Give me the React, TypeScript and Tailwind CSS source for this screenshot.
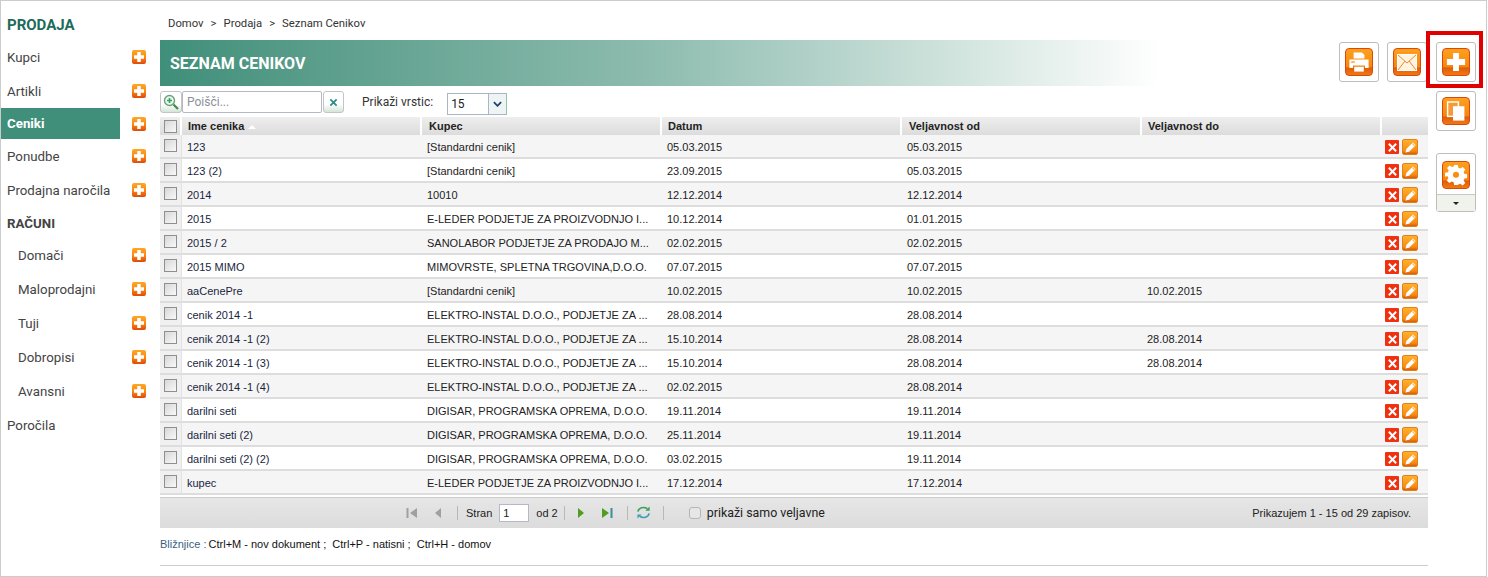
import React from 'react'

const sans = "font-['Liberation_Sans',Arial,sans-serif]"

const menu = [
    { label: 'Kupci', h: 'h-[34px]', plus: true },
    { label: 'Artikli', h: 'h-[34px]', plus: true },
    { label: 'Ceniki', h: 'h-[31px]', plus: true, active: true },
    { label: 'Ponudbe', h: 'h-[34px]', plus: true },
    { label: 'Prodajna naročila', h: 'h-[34px]', plus: true },
    { label: 'RAČUNI', h: 'h-[31px]', title: true },
    { label: 'Domači', h: 'h-[34px]', plus: true, sub: true },
    { label: 'Maloprodajni', h: 'h-[34px]', plus: true, sub: true },
    { label: 'Tuji', h: 'h-[34px]', plus: true, sub: true },
    { label: 'Dobropisi', h: 'h-[34px]', plus: true, sub: true },
    { label: 'Avansni', h: 'h-[34px]', plus: true, sub: true },
    { label: 'Poročila', h: 'h-[34px]' },
]

const rows = [
    ['123', '[Standardni cenik]', '05.03.2015', '05.03.2015', ''],
    ['123 (2)', '[Standardni cenik]', '23.09.2015', '05.03.2015', ''],
    ['2014', '10010', '12.12.2014', '12.12.2014', ''],
    ['2015', 'E-LEDER PODJETJE ZA PROIZVODNJO I...', '10.12.2014', '01.01.2015', ''],
    ['2015 / 2', 'SANOLABOR PODJETJE ZA PRODAJO M...', '02.02.2015', '02.02.2015', ''],
    ['2015 MIMO', 'MIMOVRSTE, SPLETNA TRGOVINA,D.O.O.', '07.07.2015', '07.07.2015', ''],
    ['aaCenePre', '[Standardni cenik]', '10.02.2015', '10.02.2015', '10.02.2015'],
    ['cenik 2014 -1', 'ELEKTRO-INSTAL D.O.O., PODJETJE ZA ...', '28.08.2014', '28.08.2014', ''],
    ['cenik 2014 -1 (2)', 'ELEKTRO-INSTAL D.O.O., PODJETJE ZA ...', '15.10.2014', '28.08.2014', '28.08.2014'],
    ['cenik 2014 -1 (3)', 'ELEKTRO-INSTAL D.O.O., PODJETJE ZA ...', '15.10.2014', '28.08.2014', '28.08.2014'],
    ['cenik 2014 -1 (4)', 'ELEKTRO-INSTAL D.O.O., PODJETJE ZA ...', '02.02.2015', '28.08.2014', ''],
    ['darilni seti', 'DIGISAR, PROGRAMSKA OPREMA, D.O.O.', '19.11.2014', '19.11.2014', ''],
    ['darilni seti (2)', 'DIGISAR, PROGRAMSKA OPREMA, D.O.O.', '25.11.2014', '19.11.2014', ''],
    ['darilni seti (2) (2)', 'DIGISAR, PROGRAMSKA OPREMA, D.O.O.', '03.02.2015', '19.11.2014', ''],
    ['kupec', 'E-LEDER PODJETJE ZA PROIZVODNJO I...', '17.12.2014', '17.12.2014', ''],
]

const MiniPlus = () => (
    <span className="flex items-center justify-center w-[14px] h-[14px] rounded-[2px] bg-gradient-to-b from-[#ffa726] via-[#f98a12] to-[#e0480a]">
        <svg viewBox="0 0 14 14" className="w-[14px] h-[14px]"><path d="M5.250 2h3.500v3.250H12v3.500H8.750V12h-3.500V8.750H2v-3.500h3.250z" fill="#fff" /></svg>
    </span>
)

const CheckBox = () => (
    <span className="block w-[13px] h-[13px] border border-[#8f8f8f] bg-gradient-to-br from-[#d8d8d8] to-[#f8f8f8]"></span>
)

const orange = 'w-[28px] h-[28px] rounded-[4px] border border-[#d9480f] bg-[linear-gradient(#fda01e_0%,#f7860e_70%,#e05a0c_72%,#ef7a10_100%)] flex items-center justify-center'

const ActionButton = ({ children, className = '' }: any) => (
    <div className={`w-[40px] h-[40px] rounded-[3px] border border-[#bdbdbd] bg-white flex items-center justify-center ${className}`}>
        <span className={orange}>{children}</span>
    </div>
)

const PagerSep = () => <span className="block w-px h-[14px] bg-[#b9b9b0]"></span>

export default function App() {
    return (
        <div className={`w-[1487px] h-[577px] border border-[#cccccc] bg-white flex overflow-hidden relative ${sans}`}>
            <aside className="w-[159px] shrink-0 font-['Roboto',sans-serif]">
                <h2 className="h-[39px] pt-[14px] pl-[6px] text-[15px] leading-[20px] font-bold text-[#1e6b5a]">PRODAJA</h2>
                {menu.map((item) => (
                    <div key={item.label} className={`${item.h} flex items-center relative`}>
                        <div className={`w-[119px] h-full flex items-center ${item.active ? 'bg-[#3f8f7a] text-white font-bold' : 'text-[#444444] pt-[2px]'} ${item.sub ? 'pl-[17px]' : 'pl-[6px]'} ${item.title ? 'font-bold text-[#1e6b5a]' : ''} text-[13.300px]`}>
                            {item.label}
                        </div>
                        {item.plus && <span className="ml-[12px]"><MiniPlus /></span>}
                    </div>
                ))}
            </aside>

            <main className="flex-1 min-w-0">
                <div className="h-[39px] pl-[8px] pt-[16px] text-[11.300px] leading-[14px] text-[#333333] font-['Roboto',sans-serif] flex items-start">
                    <span>Domov</span>
                    <span className="mx-[7px]">&gt;</span>
                    <span>Prodaja</span>
                    <span className="mx-[7px]">&gt;</span>
                    <span>Seznam Cenikov</span>
                </div>

                <div className="flex">
                    <div className="w-[1268px] shrink-0">
                        <div className="h-[46px] w-[1000px] flex items-center pl-[10px] bg-gradient-to-r from-[#3f8f7a] via-[#8fbdb0] to-[#ffffff]">
                            <h1 className="mt-[1px] font-['Roboto',sans-serif] font-bold text-[16px] text-white">SEZNAM CENIKOV</h1>
                        </div>

                        <div className="h-[31px] pt-[5px] flex items-start">
                            <span className="w-[22px] h-[22px] rounded-[3px] border border-[#c4c4c4] bg-[linear-gradient(#ffffff_60%,#d5e5d8)] flex items-center justify-center">
                                <svg viewBox="0 0 18 18" className="w-[18px] h-[18px]">
                                    <circle cx="7.500" cy="7.500" r="5" fill="#eef7ee" stroke="#6f9d82" strokeWidth="1.400" />
                                    <path d="M11.500 11.500 16 16" stroke="#3f8a4f" strokeWidth="2.200" />
                                    <path d="M5 7.500h5M7.500 5v5" stroke="#2fa85b" strokeWidth="1.600" />
                                </svg>
                            </span>
                            <input readOnly placeholder="Poišči..." className="w-[140px] h-[22px] border border-[#b3b9c9] rounded-[2px] px-[4px] text-[12px] font-['Roboto',sans-serif] placeholder:text-[#8a8f99] outline-none" />
                            <span className="ml-px w-[21px] h-[22px] rounded-[3px] border border-[#c4c4c4] bg-[linear-gradient(#ffffff_60%,#d5e5d8)] flex items-center justify-center text-[#2f8f86]">
                                <svg viewBox="0 0 10 10" className="w-[9px] h-[9px]"><path d="M1.500 1.500l7 7M8.500 1.500l-7 7" stroke="currentColor" strokeWidth="2" /></svg>
                            </span>
                            <span className="ml-[18px] mt-[2px] text-[12px] text-[#333333] font-['Roboto',sans-serif]">Prikaži vrstic:</span>
                            <span className="ml-[14px] mt-[2px] w-[60px] h-[22px] border border-[#a9b5c9] border-r-[#8fc9a8] flex items-center bg-white">
                                <span className="flex-1 pl-[3px] text-[12px] text-[#222222] font-['Roboto',sans-serif]">15</span>
                                <span className="w-[18px] h-full border-l border-[#a9b5c9] bg-[#eef3f3] flex items-center justify-center">
                                    <svg viewBox="0 0 10 6" className="w-[9px] h-[6px]"><path d="M1 1l4 4 4-4" fill="none" stroke="#1f3f7a" strokeWidth="2" /></svg>
                                </span>
                            </span>
                        </div>

                        <table className="w-[1268px] table-fixed border-separate border-spacing-0 text-[11px] text-[#222222] [&_td]:border-b-2 [&_td]:border-b-[#dddddd] [&_td]:pt-[2px]">
                            <colgroup>
                                <col className="w-[22px]" />
                                <col className="w-[240px]" />
                                <col className="w-[240px]" />
                                <col className="w-[240px]" />
                                <col className="w-[240px]" />
                                <col className="w-[240px]" />
                                <col className="w-[46px]" />
                            </colgroup>
                            <thead>
                                <tr className="h-[18px] bg-gradient-to-b from-[#eeeeee] to-[#dcdcdc] text-left font-bold">
                                    <th className="border-r-2 border-white pl-[4px]"><CheckBox /></th>
                                    <th className="border-r-2 border-white pl-[6px] font-bold">Ime cenika <span className="inline-block align-middle ml-[1px] w-0 h-0 border-x-[4px] border-x-transparent border-b-[4px] border-b-white"></span></th>
                                    <th className="border-r-2 border-white pl-[7px] font-bold">Kupec</th>
                                    <th className="border-r-2 border-white pl-[6px] font-bold">Datum</th>
                                    <th className="border-r-2 border-white pl-[7px] font-bold">Veljavnost od</th>
                                    <th className="border-r-2 border-white pl-[6px] font-bold">Veljavnost do</th>
                                    <th></th>
                                </tr>
                            </thead>
                            <tbody>
                                {rows.map((row, i) => (
                                    <tr key={i} className={`h-[24px] ${i % 2 === 0 ? 'bg-[#f5f5f5]' : 'bg-white'}`}>
                                        <td className="pl-[4px] pb-[4px] bg-[#f0f0f0] border-r border-r-[#e2e2e2]"><CheckBox /></td>
                                        <td className="pl-[5px] truncate text-[#1a1f40]">{row[0]}</td>
                                        <td className="pl-[5px] truncate">{row[1]}</td>
                                        <td className="pl-[5px] truncate">{row[2]}</td>
                                        <td className="pl-[5px] truncate">{row[3]}</td>
                                        <td className="pl-[5px] truncate">{row[4]}</td>
                                        <td>
                                            <div className="flex justify-end items-center gap-[3px] pr-[10px]">
                                                <span className="w-[14px] h-[14px] rounded-[1px] bg-[#f0300f] flex items-center justify-center">
                                                    <svg viewBox="0 0 12 12" className="w-[11px] h-[11px]"><path d="M2 2l8 8M10 2l-8 8" stroke="#fff" strokeWidth="2.200" /></svg>
                                                </span>
                                                <span className="w-[16px] h-[16px] -my-px rounded-[2px] border border-[#e0821a] bg-[linear-gradient(#ffb02e_0%,#f98d12_75%,#dd5c08_100%)] flex items-center justify-center">
                                                    <svg viewBox="0 0 14 14" className="w-[13px] h-[13px]"><path d="M9.500 1.500l3 3-7 7-4 1 1-4z" fill="#fff" /><path d="M8.500 2.500l3 3" stroke="#f98d12" strokeWidth="1" /></svg>
                                                </span>
                                            </div>
                                        </td>
                                    </tr>
                                ))}
                            </tbody>
                        </table>

                        <div className="mt-[2px] h-[31px] border-t border-[#cccccc] bg-gradient-to-b from-[#e6e6e6] to-[#dcdcdc] flex items-center text-[11px] text-[#222222] relative">
                            <div className="ml-[246px] flex items-center">
                                <svg viewBox="0 0 12 12" className="w-[12px] h-[12px] text-[#a0a0a0]"><path d="M1.500 1v10" stroke="currentColor" strokeWidth="2" /><path d="M11 1v10L4 6z" fill="currentColor" /></svg>
                                <svg viewBox="0 0 12 12" className="ml-[14px] w-[12px] h-[12px] text-[#a0a0a0]"><path d="M9 1v10L3 6z" fill="currentColor" /></svg>
                                <span className="ml-[13px]"><PagerSep /></span>
                                <span className="ml-[8px]">Stran</span>
                                <input readOnly value="1" className="ml-[7px] w-[30px] h-[18px] border border-[#b3b9c9] bg-white px-[3px] text-[11px] outline-none" />
                                <span className="ml-[7px]">od 2</span>
                                <span className="ml-[6px]"><PagerSep /></span>
                                <svg viewBox="0 0 12 12" className="ml-[10px] w-[12px] h-[12px]"><path d="M3 1v10l6-5z" fill="#4f9d22" /></svg>
                                <svg viewBox="0 0 12 12" className="ml-[14px] w-[12px] h-[12px]"><path d="M1 1v10l7-5z" fill="#4f9d22" /><path d="M10.500 1v10" stroke="#3a8fa0" strokeWidth="2" /></svg>
                                <span className="ml-[14px]"><PagerSep /></span>
                                <svg viewBox="0 0 16 16" className="ml-[8px] w-[15px] h-[15px]" fill="none" strokeWidth="1.700">
                                    <path d="M2 7a6 5 0 0 1 10-3" stroke="#3aa05a" /><path d="M14.500 1.500V6h-4.500z" fill="#3aa05a" />
                                    <path d="M14 9a6 5 0 0 1-10 3" stroke="#3a9fb5" /><path d="M1.500 14.500V10H6z" fill="#3a9fb5" />
                                </svg>
                                <span className="ml-[12px]"><PagerSep /></span>
                                <span className="ml-[25px] w-[12px] h-[12px] rounded-[3px] border border-[#b5b5b5] bg-[#e6e6e6]"></span>
                                <span className="ml-[6px] text-[12.400px] font-['Roboto',sans-serif]">prikaži samo veljavne</span>
                            </div>
                            <span className="ml-auto pr-[17px]">Prikazujem 1 - 15 od 29 zapisov.</span>
                        </div>

                        <p className="mt-[10px] h-[13px] text-[11px] leading-[13px] text-[#111111] whitespace-pre">
                            <span className="text-[#3a5f80] mr-[-1px]">Bližnjice : </span>Ctrl+M - nov dokument ;  Ctrl+P - natisni ;  Ctrl+H - domov
                        </p>
                        <div className="mt-[14px] h-px bg-[#cccccc]"></div>
                    </div>

                    <div className="ml-[8px] w-[40px] shrink-0 pt-[2px] flex flex-col">
                        <ActionButton>
                            <svg viewBox="0 0 20 20" className="w-[26px] h-[26px]"><path d="M7.750 3h4.500v4.750H17v4.500h-4.750V17h-4.500v-4.750H3v-4.500h4.750z" fill="#fff" /></svg>
                        </ActionButton>
                        <ActionButton className="mt-[9px]">
                            <svg viewBox="0 0 20 20" className="w-[24px] h-[24px]"><rect x="3" y="2.500" width="9" height="12" fill="#f59a3a" stroke="#fff" strokeWidth="1.200" /><rect x="7.500" y="6" width="9.500" height="12" fill="#fff" /></svg>
                        </ActionButton>
                        <div className="mt-[22px] w-[40px] h-[59px] rounded-[3px] border border-[#bdbdbd] bg-white flex flex-col items-center">
                            <span className={`mt-[7px] ${orange}`}>
                                <svg viewBox="0 0 24 24" className="w-[22px] h-[22px]" fill="#fff"><path fillRule="evenodd" d="M10 1h4l.6 3.200 2 .8 2.700-1.800 2.800 2.800-1.800 2.700.8 2 3.200.6v4l-3.200.6-.8 2 1.800 2.700-2.800 2.800-2.700-1.800-2 .8L14 23h-4l-.6-3.200-2-.8-2.700 1.800-2.800-2.800 1.800-2.700-.8-2L0 13.600v-4l3.200-.6.8-2-1.800-2.700L5 1.500l2.700 1.800 2-.8zM12 8.500a3.300 3.300 0 1 0 0 6.600 3.300 3.300 0 0 0 0-6.600z" /></svg>
                            </span>
                            <span className="mt-[5px] w-full flex-1 border-t border-[#c8c8c8] bg-[#f0f2ec] flex items-center justify-center">
                                <span className="w-0 h-0 border-x-[3px] border-x-transparent border-t-[3px] border-t-[#222222]"></span>
                            </span>
                        </div>
                    </div>
                </div>
            </main>

            <div className="absolute left-[1338px] top-[41px] flex gap-[8px]">
                <ActionButton>
                    <svg viewBox="0 0 20 20" className="w-[24px] h-[24px]">
                        <path d="M5.500 2h7l2 2v3h-9z" fill="#fff" />
                        <path d="M2 8h16v7h-3v-2H5v2H2z" fill="#fff" />
                        <path d="M6 14h8v4H6z" fill="#fff" />
                        <path d="M3.500 10h3" stroke="#f7860e" strokeWidth="1" />
                    </svg>
                </ActionButton>
                <ActionButton>
                    <svg viewBox="0 0 20 17" className="w-[20px] h-[17px]"><rect x="0.500" y="0.500" width="19" height="16" fill="#fff3e2" stroke="#fff" /><path d="M1 1l9 8 9-8M1 16l7-9M19 16l-7-9" fill="none" stroke="#f28a2c" strokeWidth="1" /></svg>
                </ActionButton>
            </div>
            <div className="absolute left-[1425px] top-[30px] w-[57px] h-[57px] border-[4px] border-[#e00000]"></div>
        </div>
    )
}
